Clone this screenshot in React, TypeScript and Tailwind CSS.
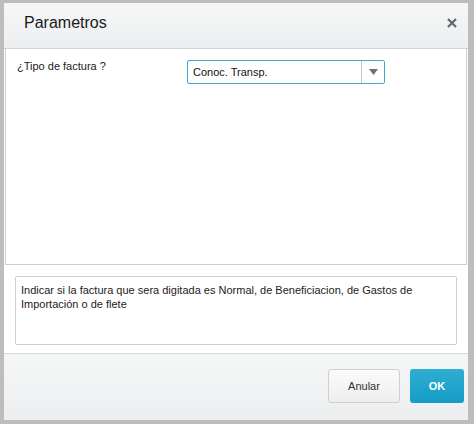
export default function App() {
    return (
        <div className="w-[474px] h-[424px] bg-[#bdbdbd] pt-[3px] pl-[4px] font-['Liberation_Sans',Arial,sans-serif]">
            <div className="w-[464px] h-[417px] flex flex-col bg-white">
                {/* header */}
                <div className="h-[46px] flex items-center justify-between border-b border-[#d2d4d6] bg-gradient-to-b from-[#f6f7f7] to-[#eceef0] pl-[20px] pr-[11px] pb-[5px]">
                    <span className="text-[16px] text-[#1a1a1a] leading-none">Parametros</span>
                    <svg width="10" height="10" viewBox="0 0 10 10" className="mb-[1px]">
                        <path d="M1 1 L9 9 M9 1 L1 9" stroke="#5f6770" strokeWidth="2.2" />
                    </svg>
                </div>

                {/* parameters panel */}
                <div className="mx-[1px] h-[216px] border-x border-b border-[#cfcfcf] bg-white flex items-start pt-[11px] pl-[11px]">
                    <span className="w-[170px] -mt-[1px] text-[11px] text-[#222] leading-[14px]">¿Tipo de factura ?</span>
                    <div className="w-[198px] h-[24px] flex border border-[#3aabd0] rounded-[2px] bg-white">
                        <span className="flex-1 flex items-center pl-[5px] text-[11px] text-[#111]">Conoc. Transp.</span>
                        <div className="w-[23px] border-l border-[#c8c8c8] flex items-center justify-center">
                            <svg width="9" height="6" viewBox="0 0 9 6">
                                <path d="M0 0 H9 L4.5 6 Z" fill="#6d7378" />
                            </svg>
                        </div>
                    </div>
                </div>

                {/* help text */}
                <div className="mt-[11px] mx-[11px] h-[69px] border border-[#cfcfcf] rounded-[2px] px-[5px] pt-[6px] text-[11px] leading-[14px] text-[#222]">
                    Indicar si la factura que sera digitada es Normal, de Beneficiacion, de Gastos de Importación o de flete
                </div>

                {/* footer */}
                <div className="mt-[8px] flex-1 border-t border-[#d6d8da] bg-gradient-to-b from-[#f5f6f6] to-[#eceef0] flex justify-end items-start pt-[15px] pr-[4px] gap-[10px]">
                    <button className="w-[72px] h-[34px] rounded-[3px] border border-[#d0d0d0] bg-gradient-to-b from-[#fbfbfb] to-[#eeeeee] text-[11px] text-[#333]">
                        Anular
                    </button>
                    <button className="w-[54px] h-[34px] rounded-[3px] bg-gradient-to-b from-[#2fadd3] to-[#129cc6] text-[11px] font-bold text-white">
                        OK
                    </button>
                </div>
            </div>
        </div>
    );
}
